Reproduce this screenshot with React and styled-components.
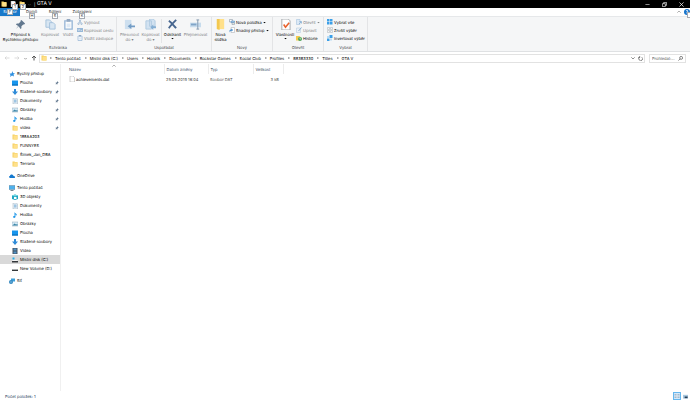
import React from "react";
import styled, { createGlobalStyle } from "styled-components";

const GlobalStyle = createGlobalStyle`
  * {
    box-sizing: border-box;
  }

  body {
    margin: 0;
    background: #fff;
    color: #000;
    font-family: Inter, "Noto Sans", sans-serif;
    font-size: 4px;
    line-height: 5px;
    text-rendering: geometricPrecision;
  }

  button,
  input {
    margin: 0;
    padding: 0;
    border: 0;
    background: none;
    color: inherit;
    font: inherit;
    text-rendering: inherit;
  }
`;

const Window = styled.div`
  display: flex;
  flex-direction: column;
  min-height: 100vh;
`;

const TitleBar = styled.header`
  display: flex;
  align-items: center;
  height: 8px;
  padding-left: 1px;
  background: #000;
  color: #fff;
`;

const QuickAccess = styled.div`
  display: flex;
  align-items: center;
  gap: 3px;
  width: 36px;
`;

const QuickButton = styled.button`
  position: relative;
  display: flex;
`;

const WindowTitle = styled.h1`
  flex: 1;
  margin: 0;
  font-size: 5px;
  font-weight: 400;
  line-height: 6px;
`;

const CaptionButton = styled.button`
  display: flex;
  justify-content: center;
  width: 17px;
`;

const KeyTip = styled.span`
  position: absolute;
  z-index: 2;
  top: ${(props) => props.$top}px;
  left: ${(props) => props.$left}px;
  width: 6px;
  height: 6px;
  border: 1px solid #a5aab2;
  background: #fff;
  color: #333;
  font-size: 4px;
  line-height: 4px;
  text-align: center;
`;

const Tabs = styled.nav`
  display: flex;
  height: 8px;
`;

const Tab = styled.button`
  position: relative;
  width: ${(props) => props.$width}px;
  background: ${(props) => (props.$file ? "#1979ca" : "transparent")};
  color: ${(props) => (props.$file ? "#fff" : "#222")};
  line-height: 8px;
  text-align: center;
`;

const TabTools = styled.div`
  display: flex;
  align-items: center;
  gap: 3px;
  margin-left: auto;
`;

const HelpButton = styled.button`
  position: relative;
  display: flex;
`;

const Ribbon = styled.div`
  display: flex;
  height: 36px;
  border-top: 1px solid #e6e8ea;
  border-bottom: 1px solid #dfe1e3;
  background: #f5f6f7;
`;

const Group = styled.section`
  display: flex;
  flex-direction: column;
  width: ${(props) => props.$width}px;
  border-right: 1px solid #e3e4e6;
`;

const GroupBody = styled.div`
  display: flex;
  flex: 1;
  padding-left: ${(props) => props.$pad || 0}px;
`;

const GroupLabel = styled.div`
  height: 6px;
  color: #3d4247;
  text-align: center;
`;

const BigButton = styled.button`
  display: flex;
  flex-direction: column;
  align-items: center;
  width: ${(props) => props.$width}px;
  padding-top: 2px;
  color: ${(props) => (props.$off ? "#7d8083" : "#000")};
  white-space: nowrap;

  svg {
    margin-bottom: 2px;
    opacity: ${(props) => (props.$off ? 0.6 : 1)};
  }
`;

const Divider = styled.span`
  width: 1px;
  margin: 2px 0;
  background: #e3e4e6;
`;

const SmallColumn = styled.div`
  display: flex;
  flex-direction: column;
  padding-top: 1px;
`;

const SmallButton = styled.button`
  display: flex;
  align-items: center;
  gap: 1px;
  height: 8px;
  color: ${(props) => (props.$off ? "#7d8083" : "#000")};
  white-space: nowrap;

  svg:first-child {
    opacity: ${(props) => (props.$off ? 0.6 : 1)};
  }
`;

const AddressRow = styled.div`
  display: flex;
  align-items: center;
  gap: 4px;
  height: 12px;
  padding: 0 4px;
`;

const NavButtons = styled.div`
  display: flex;
  align-items: center;
  justify-content: space-between;
  width: 33px;
`;

const PlainButton = styled.button`
  display: flex;
`;

const AddressBox = styled.div`
  display: flex;
  flex: 1;
  align-items: center;
  height: 9px;
  margin-left: -2px;
  padding: 0 1px;
  border: 1px solid #e2e2e2;
`;

const AddressTools = styled.div`
  display: flex;
  align-items: center;
  gap: 3px;
`;

const Crumbs = styled.ol`
  display: flex;
  flex: 1;
  gap: 1px;
  margin: 0;
  padding: 0;
  list-style: none;
`;

const Crumb = styled.li`
  display: flex;
  align-items: center;
  white-space: nowrap;

  svg {
    margin: 0 2px;
  }
`;

const CrumbLink = styled.a`
  color: #000;
  text-decoration: none;
`;

const SearchBox = styled.label`
  display: flex;
  align-items: center;
  width: 37px;
  height: 9px;
  padding: 0 2px;
  border: 1px solid #e2e2e2;
`;

const SearchInput = styled.input`
  flex: 1;
  min-width: 0;
  outline: 0;

  &::placeholder {
    color: #555;
    opacity: 1;
  }
`;

const Content = styled.div`
  display: flex;
  flex: 1;
`;

const Sidebar = styled.nav`
  width: 61px;
  padding-top: 5px;
  border-right: 1px solid #f0f0f0;
`;

const Tree = styled.ul`
  margin: 0 0 3px;
  padding: 0;
  list-style: none;
`;

const TreeLink = styled.a`
  display: flex;
  align-items: center;
  gap: 2px;
  height: 9px;
  padding-left: ${(props) => (props.$root ? 9 : 12)}px;
  background: ${(props) => (props.$selected ? "#d9d9d9" : "transparent")};
  color: #000;
  text-decoration: none;
  white-space: nowrap;
`;

const PinMark = styled.span`
  display: flex;
  margin: 0 1px 0 auto;
`;

const Files = styled.main`
  flex: 1;
`;

const FileTable = styled.table`
  width: 222px;
  border-collapse: collapse;
  table-layout: fixed;
`;

const HeadCell = styled.th`
  position: relative;
  width: ${(props) => props.$width}px;
  height: 10px;
  padding: 0 0 0 ${(props) => (props.$first ? 8 : 2)}px;
  border-right: 1px solid #ececec;
  color: #34495f;
  font-weight: 400;
  text-align: left;
`;

const SortMark = styled.span`
  position: absolute;
  top: 0;
  left: 51px;
  display: flex;
`;

const Cell = styled.td`
  height: 10px;
  padding: 0 ${(props) => (props.$right ? 4 : 0)}px 0
    ${(props) => (props.$first ? 8 : 2)}px;
  color: ${(props) => (props.$first ? "#000" : "#555")};
  text-align: ${(props) => (props.$right ? "right" : "left")};
`;

const FileName = styled.span`
  display: flex;
  align-items: center;
  gap: 1px;
`;

const StatusBar = styled.footer`
  display: flex;
  align-items: center;
  justify-content: space-between;
  height: 10px;
  padding: 0 2px 0 5px;
  color: #1e395b;
`;

const ViewButtons = styled.div`
  display: flex;
  align-items: center;
  gap: 2px;
`;

const ViewButton = styled.button`
  display: flex;
  border: ${(props) => (props.$active ? "1px solid #66b7ee" : "0")};
  background: ${(props) => (props.$active ? "#cce8ff" : "transparent")};
`;

// All glyphs are drawn on a 12x12 grid
const glyphs = {
  folder: (
    <>
      <path d="M1 1h4l1 1h5v9H1z" fill="#f5cf63" />
      <path d="M3 3h8v8H3z" fill="#ffe08a" />
    </>
  ),
  bigFolder: (
    <>
      <path d="M2 0h8v11H2z" fill="#ffe08a" />
      <path d="M2 0h3v12l-3-1z" fill="#f3c84f" />
    </>
  ),
  pin: (
    <path
      d="M7 1l4 4-1 1H9L7 8v2L6 11 4 8 1 11 3.500 7.500 1 6l1-1h2l2-2V2z"
      fill="#62788f"
    />
  ),
  star: (
    <path
      d="M7 0l1 4 4 1-3 2 1 4-4-2-4 3 1-4-2-3h4z"
      fill="#2d8fe0"
    />
  ),
  copy: (
    <g fill="#c5dcf0" stroke="#6f9fca">
      <path d="M1 1h4l2 2v6H1z" />
      <path d="M5 4h4l2 2v5H5z" />
    </g>
  ),
  paste: (
    <>
      <path d="M2 2h8v9H2z" fill="#fff" stroke="#5c8fc4" strokeWidth="1.500" />
      <path d="M4 0h4v3H4z" fill="#5577a0" />
      <path d="M4 5h4v4H4z" fill="#cfe2f4" />
    </>
  ),
  cut: (
    <g fill="none" stroke="#3d74ad" strokeWidth="1.300">
      <path d="M4 1l4 7M8 1L4 8" />
      <circle cx="3" cy="9.500" r="1.500" />
      <circle cx="9" cy="9.500" r="1.500" />
    </g>
  ),
  path: (
    <>
      <path d="M0 2h12v8H0z" fill="#5c8fc4" />
      <path d="M2 4l1 4M5 4l1 4M8 7h2" stroke="#fff" />
    </>
  ),
  move: (
    <>
      <path d="M1 1h7v10H1z" fill="#b4d0ea" />
      <path d="M12 7H8V5L4 8l4 3V9h4z" fill="#1c62a5" />
    </>
  ),
  copyTo: (
    <>
      <path d="M1 2h6v9H1zM5 0h4l2 2v6H5z" fill="#bcd6ee" stroke="#80add3" />
      <path d="M12 8H9V6L6 9l3 3v-2h3z" fill="#3c80bd" />
    </>
  ),
  remove: (
    <path
      d="M2 2c3 2 5 5 8 8M10 1C7 4 4 7 2 10"
      fill="none"
      stroke="#47668f"
      strokeWidth="2"
    />
  ),
  rename: (
    <>
      <path d="M0 4h12v5H0z" fill="#a9cbe8" />
      <path d="M1 6h6" stroke="#336fa8" strokeWidth="2" />
      <path d="M7 1h3M8.500 1v10M7 11h3" stroke="#30557d" />
    </>
  ),
  newItem: (
    <>
      <path d="M1 1h6v5H1z" fill="#fff" stroke="#7b8894" />
      <path d="M4 4h7v3H4z" fill="#a9cdec" stroke="#4b83b9" />
      <path d="M6 8h5v3H6z" fill="#fff" stroke="#7b8894" />
    </>
  ),
  easyAccess: (
    <>
      <path d="M4 1h7v10H4z" fill="#fff" stroke="#a4a9ae" />
      <path d="M2 11C0 7 1 5 5 5V3l3 3-3 3V7C3 7 2 8 2 11z" fill="#2f80c8" />
    </>
  ),
  props: (
    <>
      <path d="M2 0h7l2 2v10H2z" fill="#fff" stroke="#a2a6aa" />
      <path d="M4 6l2 3 4-5" fill="none" stroke="#e8622d" strokeWidth="1.700" />
    </>
  ),
  open: (
    <>
      <path d="M1 1h7v10H1z" fill="#cde2f5" stroke="#5f95c8" />
      <path d="M6 10l4-4M7 5h4v4" fill="none" stroke="#2f76b7" strokeWidth="1.500" />
    </>
  ),
  edit: (
    <>
      <path d="M1 2h8v9H1z" fill="#e5eef7" stroke="#7fa8cf" />
      <path d="M5 8l6-7" stroke="#4681b8" strokeWidth="2" />
    </>
  ),
  history: (
    <>
      <path d="M0 2h7l2 2v7H0z" fill="#f4cb4f" />
      <circle cx="8" cy="8" r="4" fill="#4ca45a" />
      <path d="M8 5v3h2" fill="none" stroke="#fff" />
    </>
  ),
  selectAll: (
    <path d="M0 0h5v5H0zM6 0h5v5H6zM0 6h5v5H0zM6 6h5v5H6z" fill="#3c9fe8" />
  ),
  selectNone: (
    <path
      d="M1 1h4v4H1zM7 1h4v4H7zM1 7h4v4H1zM7 7h4v4H7z"
      fill="none"
      stroke="#a7adb3"
    />
  ),
  invert: (
    <>
      <path d="M5 0h6v6H5zM0 7h5v5H0z" fill="#3c9fe8" />
      <path d="M0 2h4v4H0zM6 7h4v4H6z" fill="#b9dcf6" />
    </>
  ),
  desktop: (
    <>
      <path d="M0 1h12v10H0z" fill="#1796ee" />
      <path d="M0 9h12v2H0z" fill="#0866ac" />
    </>
  ),
  download: <path d="M4 0h4v5h4l-6 7-6-7h4z" fill="#2f8bd8" />,
  document: (
    <>
      <path d="M2 0h7l2 2v10H2z" fill="#eaf1f7" stroke="#9bacba" />
      <path d="M4 4h5M4 6h5M4 8h5" stroke="#3f8fc7" />
    </>
  ),
  image: (
    <>
      <path d="M0 2h12v8H0z" fill="#d7ebf7" stroke="#8ca4b4" />
      <path d="M1 9l4-4 3 2 3-1v3z" fill="#3c86a7" />
    </>
  ),
  music: (
    <path
      d="M5 0c1 3 5 3 5 7H9C9 5 7 5 7 5v4c0 4-5 3-5 1 0-1 1-2 3-2z"
      fill="#1d96e8"
    />
  ),
  cloud: (
    <path
      d="M2 10C-1 9 0 6 2 6c0-4 6-4 7 0 4 0 4 4 1 4z"
      fill="#1479cf"
    />
  ),
  computer: (
    <>
      <path d="M0 1h12v8H0z" fill="#4fb1ec" stroke="#6d8798" />
      <path d="M3 11h6" stroke="#51616e" strokeWidth="1.500" />
    </>
  ),
  cube: (
    <>
      <path d="M0 3l6-2 6 2v7l-6 2-6-2z" fill="#20a7c2" />
      <path d="M0 3l6 2 6-2-6-2z" fill="#75d8e5" />
      <path d="M4 6h5v4H4z" fill="#fff" />
    </>
  ),
  video: (
    <>
      <path d="M1 0h10v12H1z" fill="#47535e" />
      <path d="M3 1h6v4H3zM3 7h6v4H3z" fill="#4d91c7" />
    </>
  ),
  systemDisk: (
    <>
      <path d="M0 8h12v3H0z" fill="#34383b" />
      <path d="M1 1h4v4H1z" fill="#27aee8" />
      <path d="M1 6h10v2H1z" fill="#f4f4f4" />
    </>
  ),
  disk: (
    <>
      <path d="M0 7h12v3H0z" fill="#34383b" />
      <path d="M1 6h10v1H1z" fill="#b9bec1" />
    </>
  ),
  network: (
    <>
      <path d="M4 1h8v6H4z" fill="#3b9fda" />
      <circle cx="4" cy="8" r="4" fill="#297fb8" />
      <path d="M1 8h6M4 5v6" stroke="#8fcdf2" />
    </>
  ),
  file: <path d="M2 0h6l3 3v9H2z" fill="#fff" stroke="#a2a2a2" />,
  left: <path d="M11 6H2M5 3L2 6l3 3" fill="none" stroke="#cfcfcf" strokeWidth="1.500" />,
  right: <path d="M1 6h9M7 3l3 3-3 3" fill="none" stroke="#cfcfcf" strokeWidth="1.500" />,
  up: <path d="M6 11V2M2 6l4-4 4 4" fill="none" stroke="#555" strokeWidth="2" />,
  chevronRight: <path d="M4 3l3 3-3 3" fill="none" stroke="#444" strokeWidth="2" />,
  chevronDown: <path d="M1 4l5 5 5-5" fill="none" stroke="#555" strokeWidth="2" />,
  chevronUp: <path d="M1 8l5-5 5 5" fill="none" stroke="#888" strokeWidth="2" />,
  caret: <path d="M1 4h10L6 9z" fill="currentColor" />,
  refresh: (
    <path
      d="M9 3a4.500 4.500 0 1 1-5 0M4 0v4H0"
      fill="none"
      stroke="#555"
      strokeWidth="1.700"
    />
  ),
  search: (
    <g fill="none" stroke="#555" strokeWidth="1.700">
      <circle cx="7.500" cy="4.500" r="3.500" />
      <path d="M5 7l-4 4" />
    </g>
  ),
  minimize: <path d="M1 6h10" stroke="#ddd" strokeWidth="1.500" />,
  restore: (
    <path
      d="M1 4h7v7H1zM4 4V1h7v7H8"
      fill="none"
      stroke="#fff"
      strokeWidth="1.500"
    />
  ),
  close: <path d="M1 1l10 10M11 1L1 11" stroke="#fff" strokeWidth="1.700" />,
  help: (
    <>
      <circle cx="6" cy="6" r="6" fill="#1674cc" />
      <path d="M4 4q2-3 4 0L6 7v2" fill="none" stroke="#fff" strokeWidth="1.500" />
    </>
  ),
  details: (
    <>
      <path d="M1 1h10v10H1z" fill="#dcebf7" />
      <path d="M1 3h4M1 6h4M1 9h4M7 3h4M7 6h4M7 9h4" stroke="#71879b" />
    </>
  ),
  thumbs: (
    <>
      <path d="M0 2h12v9H0z" fill="#a7c7df" />
      <path d="M4 6h7v4H4z" fill="#273f56" />
    </>
  ),
};

const Icon = ({ name, size = 6 }) => (
  <svg
    width={size}
    height={size}
    viewBox="0 0 12 12"
    aria-hidden="true"
    style={{ flexShrink: 0 }}
  >
    {glyphs[name]}
  </svg>
);

const Big = ({ icon, lines, width, off, caret }) => (
  <BigButton type="button" $width={width} $off={off}>
    <Icon name={icon} size={11} />
    {lines.map((line) => (
      <span key={line}>{line}</span>
    ))}
    {caret && <Icon name="caret" size={3} />}
  </BigButton>
);

const Small = ({ icon, label, off, caret }) => (
  <SmallButton type="button" $off={off}>
    <Icon name={icon} />
    {label}
    {caret && <Icon name="caret" size={3} />}
  </SmallButton>
);

const crumbs = [
  "Tento počítač",
  "Místní disk (C:)",
  "Users",
  "Honzik",
  "Documents",
  "Rockstar Games",
  "Social Club",
  "Profiles",
  "B83B3330",
  "Titles",
  "GTA V",
];

const tree = [
  {
    label: "Rychlý přístup",
    icon: "star",
    items: [
      { label: "Plocha", icon: "desktop", pinned: true },
      { label: "Stažené soubory", icon: "download", pinned: true },
      { label: "Dokumenty", icon: "document", pinned: true },
      { label: "Obrázky", icon: "image", pinned: true },
      { label: "Hudba", icon: "music", pinned: true },
      { label: "videa", icon: "folder", pinned: true },
      { label: "188AA203", icon: "folder" },
      { label: "FUNNYES", icon: "folder" },
      { label: "Šimek_Jan_DBA", icon: "folder" },
      { label: "Terraria", icon: "folder" },
    ],
  },
  { label: "OneDrive", icon: "cloud", items: [] },
  {
    label: "Tento počítač",
    icon: "computer",
    items: [
      { label: "3D objekty", icon: "cube" },
      { label: "Dokumenty", icon: "document" },
      { label: "Hudba", icon: "music" },
      { label: "Obrázky", icon: "image" },
      { label: "Plocha", icon: "desktop" },
      { label: "Stažené soubory", icon: "download" },
      { label: "Videa", icon: "video" },
      { label: "Místní disk (C:)", icon: "systemDisk", selected: true },
      { label: "New Volume (D:)", icon: "disk" },
    ],
  },
  { label: "Síť", icon: "network", items: [] },
];

const App = () => {
  return (
    <Window>
      <GlobalStyle />
      <TitleBar>
        <QuickAccess>
          <Icon name="folder" />
          <QuickButton type="button" aria-label="Vlastnosti">
            <Icon name="props" />
            <KeyTip $top={3} $left={2}>1</KeyTip>
          </QuickButton>
          <QuickButton type="button" aria-label="Nová složka">
            <Icon name="folder" />
            <KeyTip $top={3} $left={1}>2</KeyTip>
          </QuickButton>
          <Icon name="chevronDown" size={3} />
          <span>|</span>
        </QuickAccess>
        <WindowTitle>GTA V</WindowTitle>
        <CaptionButton type="button" aria-label="Minimalizovat">
          <Icon name="minimize" size={5} />
        </CaptionButton>
        <CaptionButton type="button" aria-label="Obnovit">
          <Icon name="restore" size={5} />
        </CaptionButton>
        <CaptionButton type="button" aria-label="Zavřít">
          <Icon name="close" size={5} />
        </CaptionButton>
      </TitleBar>

      <Tabs>
        <Tab type="button" $width={20} $file>
          Soubor
          <KeyTip $top={1} $left={7}>F</KeyTip>
        </Tab>
        <Tab type="button" $width={23}>
          Domů
          <KeyTip $top={5} $left={9}>H</KeyTip>
        </Tab>
        <Tab type="button" $width={24}>
          Sdílení
          <KeyTip $top={5} $left={9}>S</KeyTip>
        </Tab>
        <Tab type="button" $width={30}>
          Zobrazení
          <KeyTip $top={5} $left={12}>K</KeyTip>
        </Tab>
        <TabTools>
          <PlainButton type="button" aria-label="Minimalizovat pás karet">
            <Icon name="chevronUp" size={4} />
          </PlainButton>
          <HelpButton type="button" aria-label="Nápověda">
            <Icon name="help" />
            <KeyTip $top={3} $left={3} />
          </HelpButton>
        </TabTools>
      </Tabs>

      <Ribbon>
        <Group $width={117}>
          <GroupBody>
            <Big icon="pin" lines={["Připnout k", "Rychlému přístupu"]} width={41} />
            <Big icon="copy" lines={["Kopírovat"]} width={18} off />
            <Big icon="paste" lines={["Vložit"]} width={18} off />
            <SmallColumn>
              <Small icon="cut" label="Vyjmout" off />
              <Small icon="path" label="Kopírovat cestu" off />
              <Small icon="paste" label="Vložit zástupce" off />
            </SmallColumn>
          </GroupBody>
          <GroupLabel>Schránka</GroupLabel>
        </Group>
        <Group $width={95}>
          <GroupBody $pad={2}>
            <Big icon="move" lines={["Přesunout", "do ▾"]} width={21} off />
            <Big icon="copyTo" lines={["Kopírovat", "do ▾"]} width={21} off />
            <Divider />
            <Big icon="remove" lines={["Odstranit"]} width={21} caret />
            <Big icon="rename" lines={["Přejmenovat"]} width={25} off />
          </GroupBody>
          <GroupLabel>Uspořádat</GroupLabel>
        </Group>
        <Group $width={61}>
          <GroupBody>
            <Big icon="bigFolder" lines={["Nová", "složka"]} width={17} />
            <SmallColumn>
              <Small icon="newItem" label="Nová položka" caret />
              <Small icon="easyAccess" label="Snadný přístup" caret />
            </SmallColumn>
          </GroupBody>
          <GroupLabel>Nový</GroupLabel>
        </Group>
        <Group $width={51}>
          <GroupBody $pad={1}>
            <Big icon="props" lines={["Vlastnosti"]} width={22} caret />
            <SmallColumn>
              <Small icon="open" label="Otevřít" off caret />
              <Small icon="edit" label="Upravit" off />
              <Small icon="history" label="Historie" />
            </SmallColumn>
          </GroupBody>
          <GroupLabel>Otevřít</GroupLabel>
        </Group>
        <Group $width={44}>
          <GroupBody $pad={3}>
            <SmallColumn>
              <Small icon="selectAll" label="Vybrat vše" />
              <Small icon="selectNone" label="Zrušit výběr" />
              <Small icon="invert" label="Invertovat výběr" />
            </SmallColumn>
          </GroupBody>
          <GroupLabel>Vybrat</GroupLabel>
        </Group>
      </Ribbon>

      <AddressRow>
        <NavButtons>
          <PlainButton type="button" aria-label="Zpět">
            <Icon name="left" />
          </PlainButton>
          <PlainButton type="button" aria-label="Vpřed">
            <Icon name="right" />
          </PlainButton>
          <PlainButton type="button" aria-label="Poslední umístění">
            <Icon name="chevronDown" size={3} />
          </PlainButton>
          <PlainButton type="button" aria-label="Nahoru">
            <Icon name="up" />
          </PlainButton>
        </NavButtons>
        <AddressBox>
          <Icon name="folder" />
          <Crumbs>
            {crumbs.map((crumb) => (
              <Crumb key={crumb}>
                <Icon name="chevronRight" size={4} />
                <CrumbLink href="#">{crumb}</CrumbLink>
              </Crumb>
            ))}
          </Crumbs>
          <AddressTools>
            <PlainButton type="button" aria-label="Předchozí umístění">
              <Icon name="chevronDown" size={4} />
            </PlainButton>
            <PlainButton type="button" aria-label="Aktualizovat">
              <Icon name="refresh" size={5} />
            </PlainButton>
          </AddressTools>
        </AddressBox>
        <SearchBox>
          <SearchInput type="text" placeholder="Prohledat:..." aria-label="Prohledat" />
          <Icon name="search" size={5} />
        </SearchBox>
      </AddressRow>

      <Content>
        <Sidebar>
          {tree.map((section) => (
            <Tree key={section.label}>
              <li>
                <TreeLink href="#" $root>
                  <Icon name={section.icon} />
                  {section.label}
                </TreeLink>
              </li>
              {section.items.map((item) => (
                <li key={item.label}>
                  <TreeLink href="#" $selected={item.selected}>
                    <Icon name={item.icon} />
                    {item.label}
                    {item.pinned && (
                      <PinMark>
                        <Icon name="pin" size={4} />
                      </PinMark>
                    )}
                  </TreeLink>
                </li>
              ))}
            </Tree>
          ))}
        </Sidebar>
        <Files>
          <FileTable>
            <thead>
              <tr>
                <HeadCell $width={103} $first>
                  Název
                  <SortMark>
                    <Icon name="chevronUp" size={4} />
                  </SortMark>
                </HeadCell>
                <HeadCell $width={44}>Datum změny</HeadCell>
                <HeadCell $width={45}>Typ</HeadCell>
                <HeadCell $width={30}>Velikost</HeadCell>
              </tr>
            </thead>
            <tbody>
              <tr>
                <Cell $first>
                  <FileName>
                    <Icon name="file" />
                    achievements.dat
                  </FileName>
                </Cell>
                <Cell>25.05.2019 16:04</Cell>
                <Cell>Soubor DAT</Cell>
                <Cell $right>3 kB</Cell>
              </tr>
            </tbody>
          </FileTable>
        </Files>
      </Content>

      <StatusBar>
        <span>Počet položek: 1</span>
        <ViewButtons>
          <ViewButton type="button" aria-label="Podrobnosti" $active>
            <Icon name="details" />
          </ViewButton>
          <ViewButton type="button" aria-label="Velké ikony">
            <Icon name="thumbs" size={5} />
          </ViewButton>
        </ViewButtons>
      </StatusBar>
    </Window>
  );
};

export default App;
